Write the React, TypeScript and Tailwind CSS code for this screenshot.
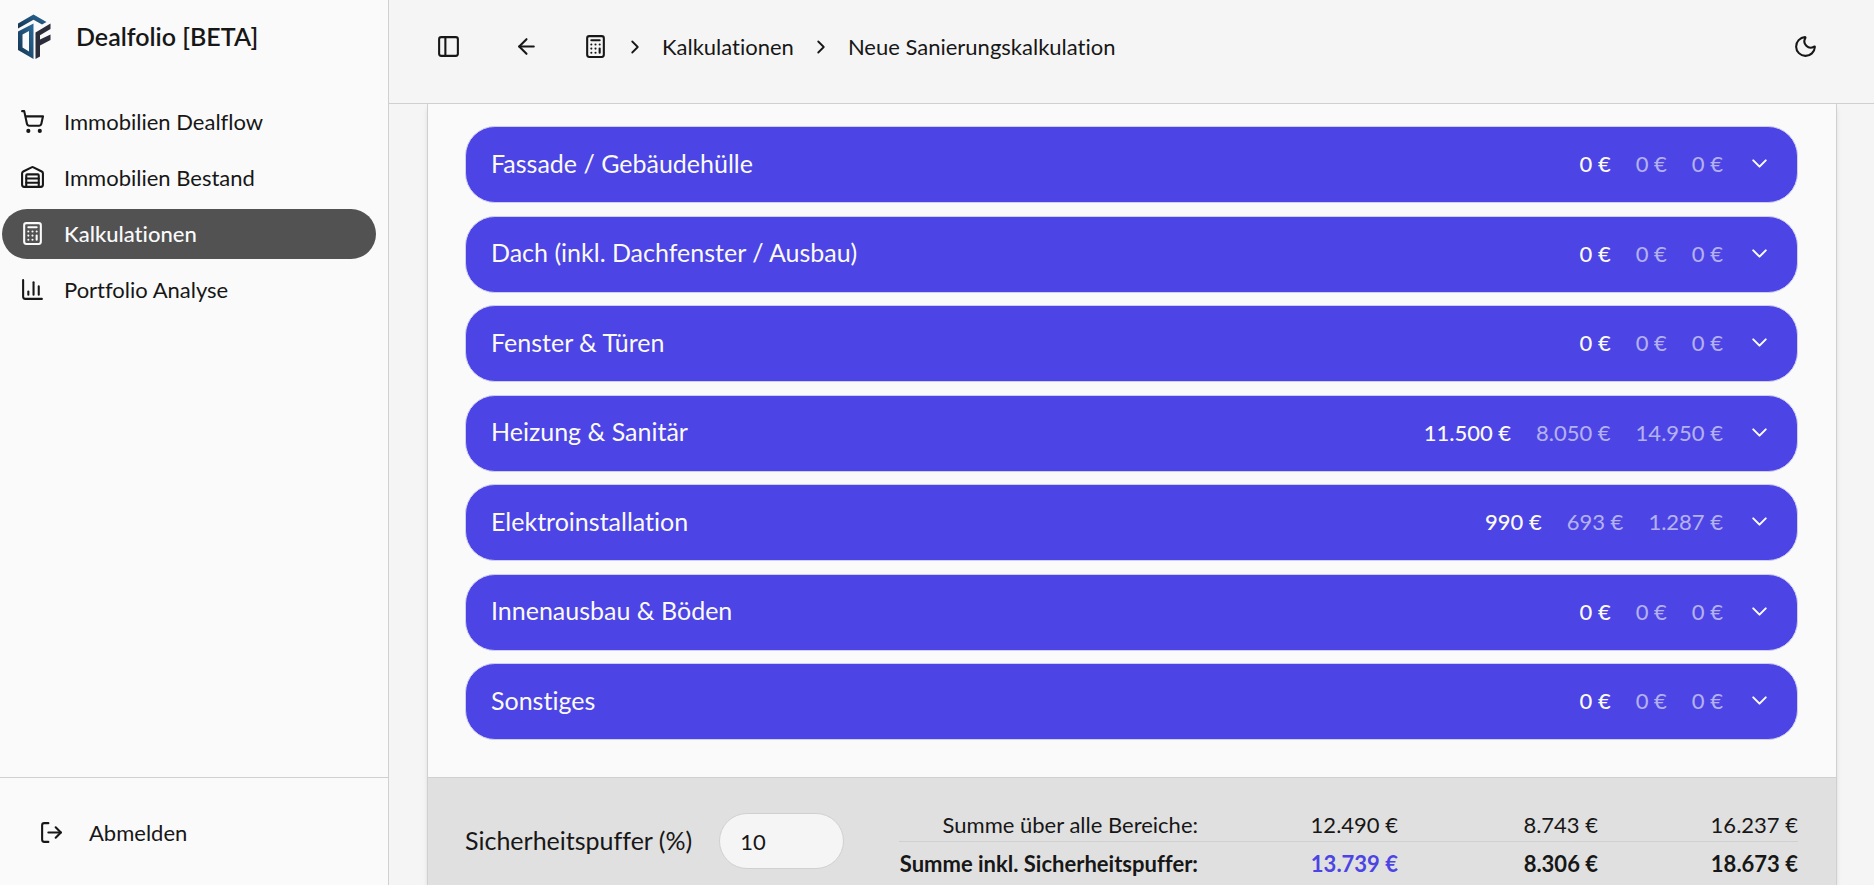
import React, { useState } from 'react';
import {
  ArrowLeft,
  Calculator,
  ChartColumn,
  ChevronDown,
  ChevronRight,
  LogOut,
  Moon,
  PanelLeft,
  ShoppingCart,
  Warehouse,
} from 'lucide-react';

type Section = {
  title: string;
  values: [string, string, string];
};

const navItems = [
  { label: 'Immobilien Dealflow', icon: ShoppingCart },
  { label: 'Immobilien Bestand', icon: Warehouse },
  { label: 'Kalkulationen', icon: Calculator, active: true },
  { label: 'Portfolio Analyse', icon: ChartColumn },
];

const sections: Section[] = [
  { title: 'Fassade / Gebäudehülle', values: ['0 €', '0 €', '0 €'] },
  { title: 'Dach (inkl. Dachfenster / Ausbau)', values: ['0 €', '0 €', '0 €'] },
  { title: 'Fenster & Türen', values: ['0 €', '0 €', '0 €'] },
  { title: 'Heizung & Sanitär', values: ['11.500 €', '8.050 €', '14.950 €'] },
  { title: 'Elektroinstallation', values: ['990 €', '693 €', '1.287 €'] },
  { title: 'Innenausbau & Böden', values: ['0 €', '0 €', '0 €'] },
  { title: 'Sonstiges', values: ['0 €', '0 €', '0 €'] },
];

const Logo: React.FC = () => (
  <svg viewBox="0 0 34 46" className="h-[46px] w-[34px]" aria-hidden="true">
    <defs>
      <linearGradient id="logo-blue" x1="1" y1="0" x2="0" y2="1">
        <stop offset="0" stopColor="#2a6c9c" />
        <stop offset="1" stopColor="#14324c" />
      </linearGradient>
    </defs>
    <path fill="url(#logo-blue)" d="M1 9.500 16.500 .5 29.500 8 25 10.500 16.500 5.800 1 14.500z" />
    <path fill="url(#logo-blue)" fillRule="evenodd" d="M1 17.500 16.500 9.500V45L1 36zM5.500 20.500V33.500L12 37.500V17z" />
    <path fill="#2b2d3b" d="M18.500 18.500 33.500 9.500V15L23 21.200V25.500L33.500 20.500V26L23 31.500V42.500L18.500 45z" />
  </svg>
);

const Sidebar: React.FC = () => (
  <aside className="flex w-[389px] shrink-0 flex-col border-r border-[#d0d0d0] bg-[#fafafa]">
    <div className="flex items-center gap-[25px] pt-[14px] pl-[17px]">
      <Logo />
      <span className="pb-[2px] text-[25px] leading-8 font-semibold">Dealfolio [BETA]</span>
    </div>
    <nav className="mt-[37px] flex flex-1 flex-col gap-[6px] pr-3 pl-[2px]">
      {navItems.map(({ label, icon: Icon, active }) => (
        <a
          key={label}
          href="#"
          className={
            active
              ? 'flex h-[50px] items-center gap-[19px] rounded-full bg-[#525252] pb-[2px] pl-[18px] text-[22px] font-medium text-[#fafafa]'
              : 'flex h-[50px] items-center gap-[19px] rounded-full pb-[2px] pl-[18px] text-[22px]'
          }
        >
          <Icon size={25} />
          {label}
        </a>
      ))}
    </nav>
    <div className="border-t border-[#d0d0d0] px-[39px] pt-8 pb-[30px]">
      <button type="button" className="flex h-[45px] items-center gap-[25px] text-[22px]">
        <LogOut size={25} />
        Abmelden
      </button>
    </div>
  </aside>
);

const Header: React.FC = () => (
  <header className="flex h-[104px] shrink-0 items-center border-b border-[#d0d0d0] pr-[56px] pb-[10px] pl-[47px]">
    <button type="button" aria-label="Seitenleiste umschalten">
      <PanelLeft size={25} />
    </button>
    <button type="button" aria-label="Zurück" className="ml-[53px]">
      <ArrowLeft size={25} />
    </button>
    <nav aria-label="Breadcrumb" className="ml-11 flex items-center gap-4 text-[22px]">
      <a href="#" aria-label="Kalkulationen">
        <Calculator size={25} />
      </a>
      <ChevronRight size={22} />
      <a href="#">Kalkulationen</a>
      <ChevronRight size={22} />
      <span>Neue Sanierungskalkulation</span>
    </nav>
    <button type="button" aria-label="Dunkler Modus" className="ml-auto">
      <Moon size={25} />
    </button>
  </header>
);

const SectionRow: React.FC<{ section: Section }> = ({ section }) => {
  const [first, second, third] = section.values;

  return (
    <li>
      <button
        type="button"
        className="flex h-[77px] w-full items-center rounded-[30px] border border-[#cfcff2] bg-[#4c44e4] px-[25px] pb-[2px] text-left text-[#fafafa]"
      >
        <span className="text-[25px]">{section.title}</span>
        <span className="ml-auto flex gap-[25px] text-[22px]">
          <span className="font-medium">{first}</span>
          <span className="opacity-60">{second}</span>
          <span className="opacity-60">{third}</span>
        </span>
        <ChevronDown size={25} className="ml-6" />
      </button>
    </li>
  );
};

const Summary: React.FC = () => {
  const [buffer, setBuffer] = useState('10');

  return (
    <footer className="flex items-start justify-between border-t border-[#d0d0d0] bg-[#e0e0e0] pt-[35px] pr-[38px] pl-[37px]">
      <div className="flex items-center gap-[27px]">
        <label htmlFor="buffer" className="text-[25px]">
          Sicherheitspuffer (%)
        </label>
        <input
          id="buffer"
          type="text"
          inputMode="numeric"
          value={buffer}
          onChange={event => setBuffer(event.target.value)}
          className="h-[56px] w-[125px] rounded-full border border-[#d0d0d0] bg-[#f5f5f5] px-5 text-[22px]"
        />
      </div>
      <table className="w-[899px] text-right text-[22px] leading-6">
        <tbody>
          <tr className="border-b border-[#d0d0d0]">
            <th scope="row" className="w-[299px] pb-1 text-right font-normal">Summe über alle Bereiche:</th>
            <td className="w-[200px] pb-1">12.490 €</td>
            <td className="w-[200px] pb-1">8.743 €</td>
            <td className="pb-1">16.237 €</td>
          </tr>
          <tr className="font-bold">
            <th scope="row" className="pt-[10px] text-right">Summe inkl. Sicherheitspuffer:</th>
            <td className="pt-[10px] text-[#4c44e4]">13.739 €</td>
            <td className="pt-[10px]">8.306 €</td>
            <td className="pt-[10px]">18.673 €</td>
          </tr>
        </tbody>
      </table>
    </footer>
  );
};

const App: React.FC = () => (
  <div className="flex h-screen overflow-hidden bg-[#f5f5f5] font-['Lato',sans-serif] text-[#171717] [font-variant-ligatures:none]">
    <Sidebar />
    <div className="flex min-w-0 flex-1 flex-col">
      <Header />
      <main className="flex min-h-0 flex-1 flex-col overflow-hidden pr-[37px] pl-[38px]">
        <div className="flex flex-1 flex-col border-x border-[#d0d0d0] bg-[#fafafa] shadow-md">
          <ul className="flex min-h-[673px] flex-col justify-between pt-[22px] pr-[38px] pb-[37px] pl-[37px]">
            {sections.map(section => (
              <SectionRow key={section.title} section={section} />
            ))}
          </ul>
          <div className="flex-1 bg-[#e0e0e0]">
            <Summary />
          </div>
        </div>
      </main>
    </div>
  </div>
);

export default App;
